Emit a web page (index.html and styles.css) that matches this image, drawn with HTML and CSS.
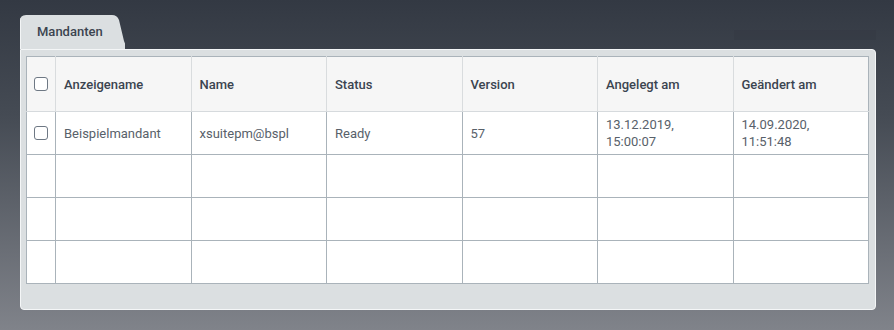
FILE: index.html
```html
<!DOCTYPE html>
<html lang="de">
<head>
<meta charset="utf-8">
<title>Mandanten</title>
<link rel="stylesheet" href="styles.css">
</head>
<body>
<div class="wrap">
  <div class="tabbar">
    <div class="tab"><span>Mandanten</span></div>
    <div class="ghost"></div>
  </div>
  <div class="panel">
    <table class="grid">
      <colgroup>
        <col class="c-check">
        <col class="c-col"><col class="c-col"><col class="c-col"><col class="c-col"><col class="c-col"><col class="c-col">
      </colgroup>
      <thead>
        <tr>
          <th class="chk"><span class="box"></span></th>
          <th>Anzeigename</th>
          <th>Name</th>
          <th>Status</th>
          <th>Version</th>
          <th>Angelegt am</th>
          <th>Geändert am</th>
        </tr>
      </thead>
      <tbody>
        <tr>
          <td class="chk"><span class="box"></span></td>
          <td>Beispielmandant</td>
          <td>xsuitepm@bspl</td>
          <td>Ready</td>
          <td>57</td>
          <td>13.12.2019,<br>15:00:07</td>
          <td>14.09.2020,<br>11:51:48</td>
        </tr>
        <tr><td></td><td></td><td></td><td></td><td></td><td></td><td></td></tr>
        <tr><td></td><td></td><td></td><td></td><td></td><td></td><td></td></tr>
        <tr><td></td><td></td><td></td><td></td><td></td><td></td><td></td></tr>
      </tbody>
    </table>
  </div>
</div>
</body>
</html>
```

FILE: styles.css
```css
html, body {
  margin: 0;
  padding: 0;
}
body {
  width: 894px;
  height: 330px;
  overflow: hidden;
  background: linear-gradient(180deg, #333943 0%, #454b54 35%, #80838a 100%);
  font-family: Roboto, "Liberation Sans", sans-serif;
  font-size: 13px;
}
.wrap {
  padding: 15px 0 0 20px;
  width: 856px;
}
.tabbar {
  display: flex;
  align-items: flex-start;
  height: 34px;
}
.tab {
  width: 108px;
  height: 34px;
  background: #dbdfe1;
  clip-path: path('M0 34 L0 6 Q0 0 6 0 L92 0 Q97 0 99 5 L104 26 Q106 33 112 34 Z');
  box-shadow: inset 1px 0 0 #f3f5f6;
}
.tab span {
  display: block;
  padding: 9px 0 0 17px;
  font-weight: 500;
  color: #3b4450;
  line-height: 16px;
}
.ghost {
  margin: 15px 0 0 609px;
  width: 145px;
  height: 10px;
  background: rgba(30, 34, 40, 0.07);
}
.panel {
  height: 253px;
  background: #dbdfe1;
  border: 1px solid #f4f6f7;
  border-radius: 0 4px 4px 4px;
  padding: 6px 6px 0 5px;
  box-sizing: content-box;
  width: 843px;
}
.grid {
  border-collapse: collapse;
  table-layout: fixed;
  width: 843px;
  background: #fff;
  border: 1px solid #aab3ba;
}
.c-check { width: 29px; }
.grid th, .grid td {
  border: 1px solid #aab3ba;
  padding: 0 8px;
  text-align: left;
  vertical-align: middle;
  line-height: 17px;
  white-space: nowrap;
  overflow: hidden;
}
.grid thead th {
  height: 54px;
  background: #f6f6f6;
  font-weight: 500;
  color: #3b4450;
  border-left-color: #d9dcde;
  border-right-color: #d9dcde;
  border-bottom-color: #d6dadd;
  border-top-color: #aab3ba;
}
.grid thead th:first-child { border-left-color: #aab3ba; }
.grid thead th:last-child { border-right-color: #aab3ba; }
.grid tbody td {
  height: 42px;
  color: #58616a;
  font-weight: 400;
}
.grid .chk {
  padding: 0 0 0 7px;
}
.box {
  display: block;
  width: 12px;
  height: 12px;
  border: 1px solid #6e7884;
  border-radius: 3px;
  background: #fff;
}
```
